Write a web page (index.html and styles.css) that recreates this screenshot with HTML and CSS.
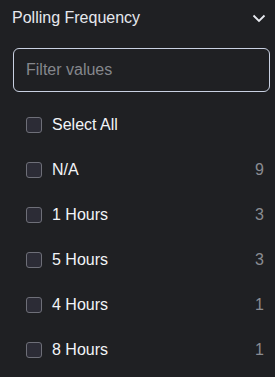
FILE: index.html
```html
<!DOCTYPE html>
<html lang="en">
  <head>
    <meta charset="UTF-8" />
    <meta name="viewport" content="width=device-width, initial-scale=1.0" />
    <title>Polling Frequency</title>
    <link rel="stylesheet" href="styles.css">
  </head>

  <body>
    <div class="panel">
      <div class="head">
        <span class="title">Polling Frequency</span>
        <svg class="chev" width="14" height="9" viewBox="0 0 14 9">
          <path d="M1.5 1.5 L7 7 L12.5 1.5" fill="none" stroke="#e8eaf0" stroke-width="1.8" />
        </svg>
      </div>

      <div class="search">
        <input type="text" placeholder="Filter values" />
      </div>

      <ul class="list">
        <li><span class="box"></span><span class="label">Select All</span></li>
        <li><span class="box"></span><span class="label">N/A</span><span class="count">9</span></li>
        <li><span class="box"></span><span class="label">1 Hours</span><span class="count">3</span></li>
        <li><span class="box"></span><span class="label">5 Hours</span><span class="count">3</span></li>
        <li><span class="box"></span><span class="label">4 Hours</span><span class="count">1</span></li>
        <li><span class="box"></span><span class="label">8 Hours</span><span class="count">1</span></li>
      </ul>
    </div>
  </body>
</html>
```

FILE: styles.css
```css
body {
  margin: 0;
  background: #1f2023;
  font-family: "Liberation Sans", Arial, sans-serif;
  color: #f2f4f8;
}
.panel {
  width: 275px;
  height: 377px;
  overflow: hidden;
}
.head {
  display: flex;
  align-items: center;
  justify-content: space-between;
  height: 36px;
  padding: 0 9px 0 12px;
}
.title {
  font-size: 16px;
  color: #e6e8ee;
}
.chev {
  margin-top: 1px;
}
.search {
  padding: 12px 5px 0 13px;
}
.search input {
  box-sizing: border-box;
  width: 257px;
  height: 44px;
  background: transparent;
  border: 1px solid #c9d1e2;
  border-radius: 6px;
  padding: 0 12px;
  font-family: inherit;
  font-size: 16px;
  color: #f2f4f8;
  outline: none;
}
.search input::placeholder {
  color: #85878c;
}
.list {
  list-style: none;
  margin: 10px 0 0;
  padding: 0 11px 0 26px;
}
.list li {
  display: flex;
  align-items: center;
  height: 45px;
  font-size: 16px;
}
.box {
  box-sizing: border-box;
  width: 16px;
  height: 16px;
  border: 1px solid #6e6f78;
  border-radius: 3px;
  background: #2c2c36;
  margin-right: 10px;
}
.label {
  flex: 1;
}
.count {
  color: #8a8c92;
}
```
